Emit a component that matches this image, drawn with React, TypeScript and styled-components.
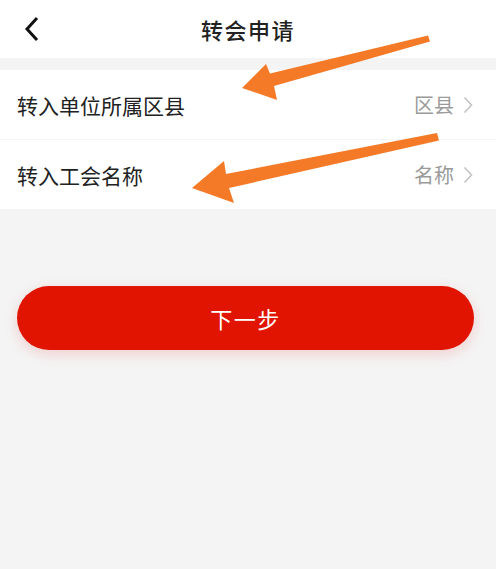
import React, { FC } from "react";
import styled, { createGlobalStyle } from "styled-components";

const GlobalStyle = createGlobalStyle`
  body {
    margin: 0;
    background: #f4f4f4;
    font-family: "Noto Sans CJK SC", "Noto Sans", sans-serif;
  }
`;

const Page = styled.div`
  position: relative;
  width: 496px;
  height: 569px;
  overflow: hidden;
  background: #f4f4f4;
`;

const Header = styled.div`
  display: flex;
  align-items: center;
  justify-content: center;
  position: relative;
  height: 58px;
  background: #fff;
`;

const BackButton = styled.div`
  position: absolute;
  left: 20px;
  top: 16px;
  width: 24px;
  height: 26px;
  display: flex;
  align-items: center;
  justify-content: center;
`;

const Title = styled.div`
  font-size: 22px;
  font-weight: 500;
  color: #222;
  letter-spacing: 1.5px;
`;

const List = styled.div`
  margin-top: 12px;
  background: #fff;
  display: flex;
  flex-direction: column;
`;

const Row = styled.div<{ $last?: boolean }>`
  display: flex;
  align-items: center;
  justify-content: space-between;
  height: 69px;
  padding: 0 23px 0 17px;
  border-bottom: ${(p) => (p.$last ? "none" : "1px solid #f5f5f5")};
`;

const Label = styled.span`
  font-size: 21px;
  color: #222;
`;

const Value = styled.span`
  display: flex;
  align-items: center;
  gap: 9px;
  font-size: 20px;
  color: #9a9a9a;
`;

const ButtonWrap = styled.div`
  padding: 77px 22px 0 17px;
`;

const NextButton = styled.div`
  height: 64px;
  border-radius: 32px;
  background: #e01400;
  color: #fff;
  font-size: 22px;
  letter-spacing: 1.5px;
  display: flex;
  align-items: center;
  justify-content: center;
  box-shadow: 0 4px 14px rgba(224, 20, 0, 0.16);
`;

const Overlay = styled.svg`
  position: absolute;
  left: 0;
  top: 0;
  pointer-events: none;
`;

const Chevron: FC = () => (
  <svg width="10" height="18" viewBox="0 0 10 18">
    <path d="M1.5 1.5 L8.5 9 L1.5 16.5" fill="none" stroke="#c4c4c4" strokeWidth="1.6" />
  </svg>
);

const rows = [
  { label: "转入单位所属区县", value: "区县" },
  { label: "转入工会名称", value: "名称" },
];

const App: FC = () => {
  return (
    <>
      <GlobalStyle />
      <Page>
        <Header>
          <BackButton>
            <svg width="16" height="26" viewBox="0 0 16 26">
              <path d="M13 2 L3 13 L13 24" fill="none" stroke="#111" strokeWidth="3" />
            </svg>
          </BackButton>
          <Title>转会申请</Title>
        </Header>
        <List>
          {rows.map((r, i) => (
            <Row key={r.label} $last={i === rows.length - 1}>
              <Label>{r.label}</Label>
              <Value>
                {r.value}
                <Chevron />
              </Value>
            </Row>
          ))}
        </List>
        <ButtonWrap>
          <NextButton>下一步</NextButton>
        </ButtonWrap>
        <Overlay width="496" height="569" viewBox="0 0 496 569">
          <polygon
            fill="#f57a27"
            points="428,35.5 270,73.5 266,64 242,88 277,100 274,86 430,41.5"
          />
          <polygon
            fill="#f57a27"
            points="437,133 226,174 224,161 192,188 234,203 229,188 439,140.5"
          />
        </Overlay>
      </Page>
    </>
  );
};

export default App;
